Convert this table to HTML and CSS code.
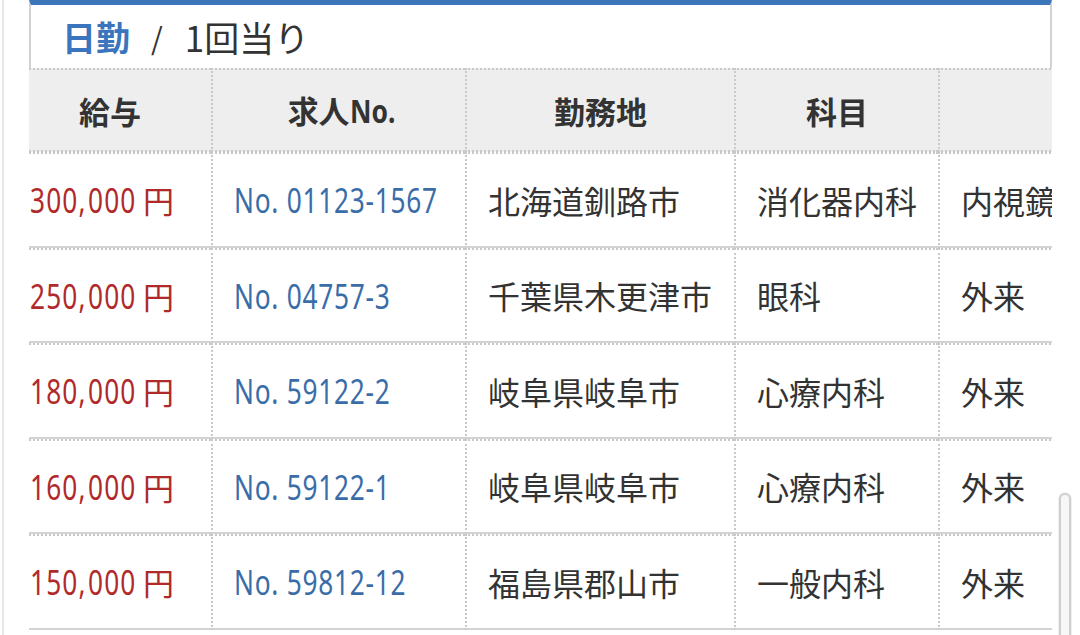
FILE: index.html
```html
<!DOCTYPE html>
<html lang="ja">
<head>
<meta charset="utf-8">
<link rel="stylesheet" href="styles.css">
</head>
<body>
<div class="page">
  <div class="panel">
    <div class="title"><span class="title-main">日勤</span><span class="title-sep">/</span><span class="title-sub">1回当り</span></div>
    <div class="scroll">
      <table class="jobs">
        <colgroup>
          <col class="w1"><col class="w2"><col class="w3"><col class="w4"><col class="w5">
        </colgroup>
        <thead>
          <tr>
            <th class="c1">給与</th>
            <th class="c2">求人<span class="hno">No.</span></th>
            <th class="c3">勤務地</th>
            <th class="c4">科目</th>
            <th class="c5"></th>
          </tr>
        </thead>
        <tbody>
          <tr>
            <td class="c1 pay"><span class="num lead">300,</span><span class="num tail">000</span><span class="yen">円</span></td>
            <td class="c2 no"><span class="num">No. 01123-1567</span></td>
            <td class="c3">北海道釧路市</td>
            <td class="c4">消化器内科</td>
            <td class="c5">内視鏡検査</td>
          </tr>
          <tr>
            <td class="c1 pay"><span class="num lead">250,</span><span class="num tail">000</span><span class="yen">円</span></td>
            <td class="c2 no"><span class="num">No. 04757-3</span></td>
            <td class="c3">千葉県木更津市</td>
            <td class="c4">眼科</td>
            <td class="c5">外来</td>
          </tr>
          <tr>
            <td class="c1 pay"><span class="num lead">180,</span><span class="num tail">000</span><span class="yen">円</span></td>
            <td class="c2 no"><span class="num">No. 59122-2</span></td>
            <td class="c3">岐阜県岐阜市</td>
            <td class="c4">心療内科</td>
            <td class="c5">外来</td>
          </tr>
          <tr>
            <td class="c1 pay"><span class="num lead">160,</span><span class="num tail">000</span><span class="yen">円</span></td>
            <td class="c2 no"><span class="num">No. 59122-1</span></td>
            <td class="c3">岐阜県岐阜市</td>
            <td class="c4">心療内科</td>
            <td class="c5">外来</td>
          </tr>
          <tr>
            <td class="c1 pay"><span class="num lead">150,</span><span class="num tail">000</span><span class="yen">円</span></td>
            <td class="c2 no"><span class="num">No. 59812-12</span></td>
            <td class="c3">福島県郡山市</td>
            <td class="c4">一般内科</td>
            <td class="c5">外来</td>
          </tr>
        </tbody>
      </table>
    </div>
  </div>
  <div class="scrollbar"></div>
</div>
</body>
</html>
```

FILE: styles.css
```css
html, body {
  margin: 0;
  padding: 0;
  background: #ffffff;
}

body {
  width: 1080px;
  height: 635px;
  overflow: hidden;
  font-family: "Noto Sans CJK JP", "Noto Sans", sans-serif;
  color: #333333;
}

.page {
  position: relative;
  height: 635px;
  margin-left: 2px;
  border-left: 2px solid #e8e8e8;
  padding-left: 25px;
  padding-right: 28px;
}

.panel {
  width: 1023px;
}

.title {
  height: 63px;
  border-top: 5px solid #3d75bb;
  border-left: 2px solid #d2d2d2;
  border-right: 2px solid #d2d2d2;
  padding-left: 31px;
  display: flex;
  align-items: center;
  font-size: 35px;
  line-height: 1;
}

.title-main {
  color: #3a75bd;
  font-weight: 700;
  font-size: 34px;
}

.title-sep {
  color: #333333;
  margin: 0 22px 0 21px;
  font-size: 30px;
}

.title-sub {
  color: #333333;
}

.scroll {
  overflow: hidden;
  width: 1023px;
}

.jobs {
  border-collapse: separate;
  border-spacing: 0;
  margin-left: -20px;
  table-layout: fixed;
  width: 1249px;
}

.jobs col.w1 { width: 202px; }
.jobs col.w2 { width: 254px; }
.jobs col.w3 { width: 269px; }
.jobs col.w4 { width: 204px; }
.jobs col.w5 { width: 320px; }

.jobs th,
.jobs td {
  box-sizing: border-box;
  border-left: 2px dotted #c9c9c9;
  border-top: 2px dotted #c9c9c9;
  border-bottom: 2px solid #d3d3d3;
  padding: 0 0 0 21px;
  font-size: 32px;
  white-space: nowrap;
  overflow: hidden;
  text-align: left;
}

.jobs .c1 {
  border-left: none;
}

.jobs th {
  background: #eeeeee;
  height: 84px;
  font-weight: 700;
  font-size: 31px;
  text-align: center;
  padding: 0;
  color: #333333;
  border-bottom: 2px dotted #c9c9c9;
}

.hno {
  font-family: "Noto Sans", sans-serif;
  display: inline-block;
  font-size: 33px;
  transform: scaleX(0.8);
  transform-origin: left center;
  margin-right: -16px;
}

.jobs td {
  height: 95.5px;
  color: #333333;
}

.num {
  display: inline-block;
  font-family: "Noto Sans", "DejaVu Sans", sans-serif;
  font-size: 35px;
  letter-spacing: 1.5px;
  transform: scaleX(0.75);
  transform-origin: left center;
}

.pay .lead {
  width: 75px;
  margin-right: -17px;
}

.pay .tail {
  width: 65px;
  margin-right: -10px;
}

.no .num {
  letter-spacing: 1px;
  margin-right: -70px;
}

.jobs td.pay {
  color: #b02a2a;
}

.jobs td.no {
  color: #3a6da8;
}

.yen {
  font-family: "Noto Sans CJK JP", sans-serif;
  font-size: 31px;
}

.scrollbar {
  position: absolute;
  left: 1055px;
  top: 493px;
  width: 8px;
  height: 160px;
  border: 2px solid #cfcfcf;
  border-radius: 6px;
  background: #f7f7f7;
  box-shadow: 0 0 0 1px #f0f0f0;
}
```
